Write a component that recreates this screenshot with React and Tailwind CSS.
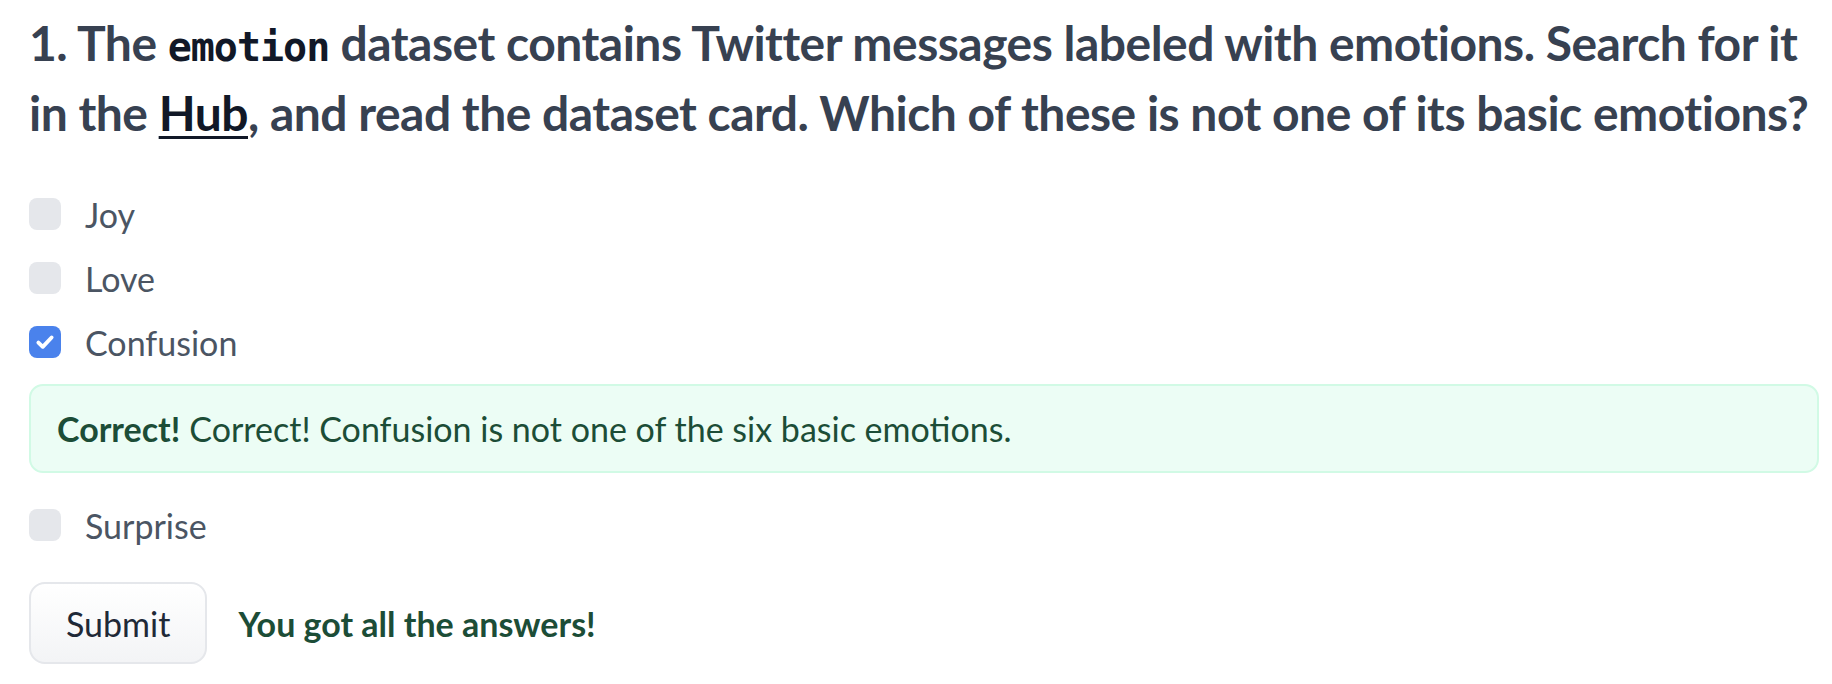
import { useState } from 'react';

const options = ['Joy', 'Love', 'Confusion', 'Surprise'];

function CheckBox({ checked }) {
  return (
    <span
      className={`w-8 h-8 rounded-lg flex items-center justify-center shrink-0 ${
        checked ? 'bg-[#4a82ec]' : 'bg-[#e5e7eb]'
      }`}
    >
      {checked && (
        <svg width="24" height="24" viewBox="0 0 16 16" fill="none">
          <path d="M3.6 8.4l2.9 2.8 5.9-6.2" stroke="white" strokeWidth="2.6" strokeLinecap="round" strokeLinejoin="round" />
        </svg>
      )}
    </span>
  );
}

export default function App() {
  const [selected, setSelected] = useState('Confusion');

  return (
    <div className="min-h-screen bg-white pl-[29px] pr-[13px] pt-[8px]" style={{ fontFamily: 'Lato, "Noto Sans", sans-serif' }}>
      {/* Question */}
      <h2 className="text-[48px] leading-[70px] font-bold text-[#374151] tracking-[-0.5px]">
        1. The{' '}
        <code className="font-['DejaVu_Sans_Mono',monospace] text-[40px] leading-none font-bold text-[#111827] tracking-[-1px]">emotion</code>{' '}
        dataset contains Twitter messages labeled with emotions. Search for it
        <br />
        in the <a className="underline text-[#111827] underline-offset-[5px] decoration-[3px]">Hub</a>, and read the dataset card.
        Which of these is not one of its basic emotions?
      </h2>

      {/* Options */}
      <div className="mt-[34px] flex flex-col">
        {options.map((opt) => (
          <div key={opt}>
            <label
              className="flex items-center gap-[24px] h-[64px] cursor-pointer"
              onClick={() => setSelected(opt)}
            >
              <CheckBox checked={selected === opt} />
              <span className="text-[34px] text-[#4b5563]">{opt}</span>
            </label>
            {opt === 'Confusion' && selected === 'Confusion' && (
              <div className="mt-[10px] mb-[20px] h-[89px] flex items-center px-[26px] rounded-[14px] border-2 border-[#d1fae5] bg-[#ecfdf5] text-[34px] text-[#1c4d37]">
                <span className="font-bold mr-[9px]">Correct!</span>
                Correct! Confusion is not one of the six basic emotions.
              </div>
            )}
          </div>
        ))}
      </div>

      {/* Submit */}
      <div className="mt-[25px] flex items-center gap-[31px]">
        <button className="h-[82px] px-[35px] rounded-2xl border-2 border-[#e5e7eb] bg-gradient-to-b from-white to-[#f3f4f6] text-[34px] text-[#1f2937]">
          Submit
        </button>
        <span className="text-[34px] font-bold text-[#1c4d37]">You got all the answers!</span>
      </div>
    </div>
  );
}
